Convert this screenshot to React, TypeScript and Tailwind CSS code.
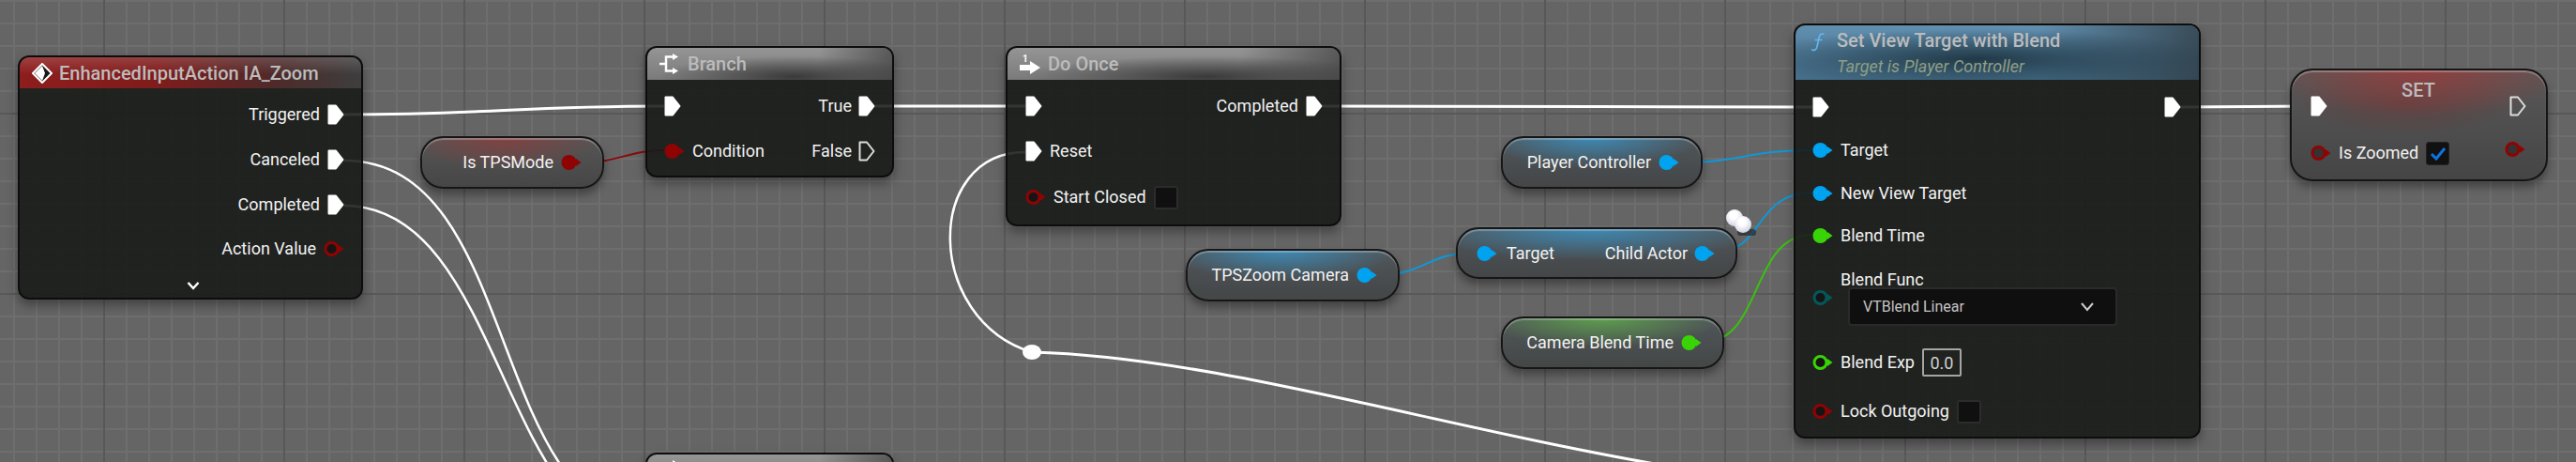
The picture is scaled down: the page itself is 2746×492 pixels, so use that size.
import React from "react";

function Exec({ hollow = false }: { hollow?: boolean }) {
  return (
    <svg width="18" height="22" viewBox="0 0 18 22" className="shrink-0">
      <path
        d="M1.5 1.5 H9 L16.5 11 L9 20.5 H1.5 Z"
        fill={hollow ? "none" : "#ffffff"}
        stroke={hollow ? "#dddddd" : "#ffffff"}
        strokeWidth="2"
        strokeLinejoin="round"
      />
    </svg>
  );
}

function Pin({ color, hollow = false, inner = "#151515" }: { color: string; hollow?: boolean; inner?: string }) {
  return (
    <svg width="22" height="18" viewBox="0 0 22 18" className="shrink-0">
      <path d="M16 5 L21.5 9 L16 13 Z" fill={color} />
      {hollow ? (
        <circle cx="8.5" cy="9" r="6.5" fill={inner} stroke={color} strokeWidth="3" />
      ) : (
        <circle cx="8.5" cy="9" r="8" fill={color} />
      )}
    </svg>
  );
}

const RED = "#8f0303";
const BLUE = "#00a3f0";
const GREEN = "#38d406";
const TEAL = "#04585a";

function Check() {
  return <div className="w-[26px] h-[25px] rounded-[3px] border-2 border-[#2c2c2c] bg-[#101010] shrink-0" />;
}

const label = "text-[18px] leading-[24px] text-[#f2f2f2] whitespace-nowrap";
const title = "text-[20px] leading-[24px] font-medium text-[#bcbcbc] whitespace-nowrap";
const node =
  "absolute rounded-[12px] border-2 border-[#0d0d0d] bg-[rgba(23,25,23,0.88)] overflow-hidden shadow-[0_6px_12px_rgba(0,0,0,0.35)]";
const pill =
  "absolute rounded-[24px] border-2 border-[#161616] flex items-center shadow-[inset_0_2px_1px_rgba(255,255,255,0.28),0_6px_10px_rgba(0,0,0,0.35)]";
const headGrey =
  "bg-[radial-gradient(ellipse_55%_65%_at_60%_90%,#3a3a3a,transparent),linear-gradient(90deg,transparent_70%,rgba(50,50,50,0.6)),linear-gradient(180deg,#959595,#7a7a7a)]";

function BranchIcon() {
  return (
    <svg width="21" height="22" viewBox="0 0 21 22" className="shrink-0" fill="none">
      <path d="M0 11 H6 M7 11 V3.5 H15 M7 11 V18.5 H15" stroke="#fff" strokeWidth="2.5" />
      <path d="M14 0 L20 3.5 L14 7 Z M14 15 L20 18.5 L14 22 Z" fill="#fff" />
    </svg>
  );
}

function BranchHeader() {
  return (
    <div className={`h-[34px] flex items-center pl-[13px] gap-[9px] ${headGrey}`}>
      <BranchIcon />
      <span className={title}>Branch</span>
    </div>
  );
}

export default function App() {
  return (
    <div className="relative w-[2746px] h-[492px] overflow-hidden bg-[#656565] [font-family:Roboto,sans-serif] [background-image:linear-gradient(90deg,#585858_2px,transparent_2px),linear-gradient(180deg,#585858_2px,transparent_2px),linear-gradient(90deg,#6e6e6e_2px,transparent_2px),linear-gradient(180deg,#6e6e6e_2px,transparent_2px)] [background-size:192px_192px,192px_192px,24px_24px,24px_24px] [background-position:110px_0,0_120px,14px_0,0_0]">
      <svg className="absolute inset-0 w-full h-full" viewBox="0 0 2746 492" fill="none">
        <g stroke="#ffffff" strokeWidth="3">
          <path d="M367 122 C 520 122, 555 113, 708 113" />
          <path d="M933 113 H 1093" />
          <path d="M1410 113 C 1600 113, 1750 114, 1932 114" />
          <path d="M2325 114 C 2380 114, 2410 113, 2463 113" />
          <path d="M367 171 C 560 171, 515 560, 708 560" strokeWidth="2.5" />
          <path d="M367 219 C 540 219, 530 580, 708 580" strokeWidth="2.5" />
          <path d="M1093 162 C 985 162, 985 340, 1100 375" strokeWidth="2.5" />
          <path d="M1100 375 C 1300 380, 1550 460, 1800 500" />
        </g>
        <g strokeWidth="2">
          <path d="M620 173 C 660 173, 670 160, 708 160" stroke="#8a0a0a" />
          <path d="M1468 293 C 1520 293, 1520 269, 1574 269" stroke="#0e98d8" />
          <path d="M1790 173 C 1860 173, 1860 160, 1932 160" stroke="#0e98d8" />
          <path d="M1828 269 C 1880 269, 1870 205, 1932 205" stroke="#0e98d8" />
          <path d="M1814 365 C 1880 365, 1865 250, 1932 250" stroke="#38c40a" />
        </g>
      </svg>

      {/* Knot */}
      <svg className="absolute left-[1089px] top-[366px]" width="22" height="18" viewBox="0 0 22 18">
        <ellipse cx="11" cy="9" rx="10" ry="8" fill="#ffffff" />
      </svg>

      {/* Input action */}
      <div className={`${node} left-[19px] top-[59px] w-[368px] h-[260px]`}>
        <div className="h-[33px] flex items-center pl-[13px] gap-[7px] bg-[linear-gradient(180deg,rgba(255,255,255,0.16),rgba(255,255,255,0)_55%),linear-gradient(90deg,#8e1d1d_0%,#801c1c_40%,#4e2a2a_75%,#3e3e3e_100%)]">
          <svg width="22" height="22" viewBox="0 0 22 22" className="shrink-0">
            <path d="M11 1 L21 11 L11 21 L1 11 Z" fill="#191919" stroke="#fff" strokeWidth="2" strokeLinejoin="round" />
            <path d="M11 3 L3 11 L11 19 L14 11 Z" fill="#fff" />
          </svg>
          <span className={title}>EnhancedInputAction IA_Zoom</span>
        </div>
        <div className="pt-1 pr-[18px]">
          {["Triggered", "Canceled", "Completed"].map((t) => (
            <div key={t} className="h-12 flex items-center justify-end gap-2">
              <span className={label}>{t}</span>
              <Exec />
            </div>
          ))}
          <div className="h-[46px] flex items-center justify-end gap-2">
            <span className={label}>Action Value</span>
            <Pin color={RED} hollow />
          </div>
        </div>
        <div className="h-8 flex items-center pl-[178px]">
          <svg width="14" height="10" viewBox="0 0 14 10" fill="none">
            <path d="M1.5 2 L7 8 L12.5 2" stroke="#fff" strokeWidth="2.5" />
          </svg>
        </div>
      </div>

      {/* Is TPSMode */}
      <div className={`${pill} left-[448px] top-[145px] w-[196px] h-[56px] justify-end gap-2 pr-[22px] bg-[radial-gradient(ellipse_55%_65%_at_45%_0%,rgba(140,60,60,0.8),transparent),linear-gradient(180deg,#565656,#464646)]`}>
        <span className={label}>Is TPSMode</span>
        <Pin color={RED} />
      </div>

      {/* Branch */}
      <div className={`${node} w-[265px] left-[688px] top-[49px] h-[140px]`}>
        <BranchHeader />
        <div className="pt-1">
          <div className="h-12 flex items-center justify-between pl-[18px] pr-[18px]">
            <Exec />
            <div className="flex items-center gap-[7px]">
              <span className={label}>True</span>
              <Exec />
            </div>
          </div>
          <div className="h-12 flex items-center justify-between pl-[18px] pr-[18px]">
            <div className="flex items-center gap-2">
              <Pin color={RED} />
              <span className={label}>Condition</span>
            </div>
            <div className="flex items-center gap-[7px]">
              <span className={label}>False</span>
              <Exec hollow />
            </div>
          </div>
        </div>
      </div>

      {/* Do Once */}
      <div className={`${node} left-[1072px] top-[49px] w-[358px] h-[192px]`}>
        <div className={`h-[34px] flex items-center pl-[13px] gap-[7px] ${headGrey}`}>
          <svg width="23" height="23" viewBox="0 0 23 23" className="shrink-0">
            <text x="3" y="9" fontSize="10" fontWeight="700" fill="#fff" fontFamily="Roboto, sans-serif">1</text>
            <path d="M0 12 H11 V8 L22 15 L11 22 V18 H0 Z" fill="#fff" />
          </svg>
          <span className={title}>Do Once</span>
        </div>
        <div className="pt-1 pl-[19px] pr-[18px]">
          <div className="h-12 flex items-center justify-between">
            <Exec />
            <div className="flex items-center gap-2">
              <span className={label}>Completed</span>
              <Exec />
            </div>
          </div>
          <div className="h-12 flex items-center gap-2">
            <Exec />
            <span className={label}>Reset</span>
          </div>
          <div className="h-[50px] flex items-center gap-2">
            <Pin color={RED} hollow />
            <span className={label}>Start Closed</span>
            <Check />
          </div>
        </div>
      </div>

      {/* Second branch, cut by the bottom edge */}
      <div className={`${node} w-[265px] left-[688px] top-[482px] h-[140px]`}>
        <BranchHeader />
      </div>

      {/* TPSZoom Camera */}
      <div className={`${pill} left-[1264px] top-[265px] w-[228px] h-[56px] justify-end gap-2 pr-[22px] bg-[radial-gradient(ellipse_55%_60%_at_45%_0%,rgba(58,145,195,0.85),transparent),linear-gradient(180deg,#50565a,#444647)]`}>
        <span className={label}>TPSZoom Camera</span>
        <Pin color={BLUE} />
      </div>

      {/* Player Controller */}
      <div className={`${pill} left-[1600px] top-[145px] w-[215px] h-[56px] justify-end gap-2 pr-[23px] bg-[radial-gradient(ellipse_55%_60%_at_45%_0%,rgba(58,145,195,0.85),transparent),linear-gradient(180deg,#50565a,#444647)]`}>
        <span className={label}>Player Controller</span>
        <Pin color={BLUE} />
      </div>

      {/* Get Child Actor */}
      <div className={`${pill} left-[1552px] top-[242px] w-[300px] h-[55px] justify-between pl-5 pr-[22px] bg-[radial-gradient(ellipse_62%_65%_at_48%_0%,rgba(58,145,195,0.85),transparent),linear-gradient(180deg,#50565a,#444647)]`}>
        <div className="flex items-center gap-[10px]">
          <Pin color={BLUE} />
          <span className={label}>Target</span>
        </div>
        <div className="flex items-center gap-[7px]">
          <span className={label}>Child Actor</span>
          <Pin color={BLUE} />
        </div>
      </div>

      {/* Spheres */}
      <div className="absolute left-[1852px] top-[244px] w-[20px] h-[7px] rounded-full bg-[rgba(30,30,30,0.6)]" />
      <div className="absolute left-[1840px] top-[223px] w-[18px] h-[18px] rounded-full bg-[radial-gradient(circle_at_45%_35%,#ffffff_25%,#c6c8da_85%,#9ea1bb)]" />
      <div className="absolute left-[1849px] top-[230px] w-[18px] h-[18px] rounded-full bg-[radial-gradient(circle_at_45%_35%,#ffffff_25%,#c6c8da_85%,#9093b0)]" />

      {/* Camera Blend Time */}
      <div className={`${pill} left-[1600px] top-[337px] w-[238px] h-[56px] justify-end gap-2 pr-[22px] bg-[radial-gradient(ellipse_55%_60%_at_45%_0%,rgba(95,170,75,0.85),transparent),linear-gradient(180deg,#50565a,#444746)]`}>
        <span className={label}>Camera Blend Time</span>
        <Pin color={GREEN} />
      </div>

      {/* Set View Target */}
      <div className={`${node} left-[1912px] top-[25px] w-[434px] h-[442px]`}>
        <div className="h-[58px] flex pl-4 gap-3 bg-[radial-gradient(ellipse_60%_55%_at_45%_62%,#213947,transparent),linear-gradient(90deg,transparent_60%,rgba(45,55,62,0.75)),linear-gradient(180deg,#618faf,#46708c)]">
          <svg width="16" height="20" viewBox="0 0 16 20" fill="none" className="shrink-0 mt-2">
            <path d="M14.5 1.5 C11 0 9.5 2 9 5.5 L7 14.5 C6.5 18 4 19 1 18 M4.5 7.5 H12.5" stroke="#62b7ee" strokeWidth="1.6" />
          </svg>
          <div className="flex flex-col pt-[4px] gap-1">
            <span className={title}>Set View Target with Blend</span>
            <span className="text-[18px] leading-[24px] italic text-[#8f9f85] whitespace-nowrap">Target is Player Controller</span>
          </div>
        </div>
        <div className="pt-[6px] pl-[18px] pr-[19px]">
          <div className="h-[46px] flex items-center justify-between">
            <Exec />
            <Exec />
          </div>
          <div className="h-[46px] flex items-center gap-2">
            <Pin color={BLUE} />
            <span className={label}>Target</span>
          </div>
          <div className="h-[45px] flex items-center gap-2">
            <Pin color={BLUE} />
            <span className={label}>New View Target</span>
          </div>
          <div className="h-[45px] flex items-center gap-2">
            <Pin color={GREEN} />
            <span className={label}>Blend Time</span>
          </div>
          <div className="mt-[13px] flex items-center gap-2">
            <Pin color={TEAL} hollow />
            <div>
              <div className={`${label} h-5 leading-[20px]`}>Blend Func</div>
              <div className="ml-2 w-[287px] h-[41px] rounded-[4px] border-2 border-[#2a2a2a] bg-[#0f0f0f] flex items-center justify-between pl-[14px] pr-[22px]">
                <span className="text-[16px] text-[#c4c4c4]">VTBlend Linear</span>
                <svg width="16" height="11" viewBox="0 0 16 11" fill="none">
                  <path d="M2 2 L8 9 L14 2" stroke="#cccccc" strokeWidth="2" />
                </svg>
              </div>
            </div>
          </div>
          <div className="mt-[24px] h-[30px] flex items-center gap-2">
            <Pin color={GREEN} hollow />
            <span className={label}>Blend Exp</span>
            <div className="w-[42px] h-[30px] border-2 border-[#a5a5a5] rounded-[2px] flex items-center justify-center text-[18px] text-[#d0d0d0]">0.0</div>
          </div>
          <div className="mt-[24px] h-[26px] flex items-center gap-2">
            <Pin color={RED} hollow />
            <span className={label}>Lock Outgoing</span>
            <Check />
          </div>
        </div>
      </div>

      {/* SET */}
      <div className="absolute left-[2441px] top-[73px] w-[275px] h-[120px] rounded-[24px] border-2 border-[#141414] shadow-[inset_0_2px_1px_rgba(255,255,255,0.28),0_6px_10px_rgba(0,0,0,0.35)] bg-[radial-gradient(ellipse_62%_42%_at_50%_0%,rgba(150,60,60,0.9),transparent),radial-gradient(ellipse_45%_30%_at_45%_30%,rgba(110,50,50,0.5),transparent),linear-gradient(180deg,#585858,#454545)]">
        <div className="mt-2 h-[60px] flex items-center justify-between pl-5 pr-[21px]">
          <Exec />
          <span className="self-start mt-[1px] text-[20px] leading-[24px] font-medium text-[#bcbcbc]">SET</span>
          <Exec hollow />
        </div>
        <div className="h-10 flex items-center justify-between pl-5 pr-[22px]">
          <div className="flex items-center gap-2">
            <Pin color={RED} hollow inner="#333333" />
            <span className={label}>Is Zoomed</span>
            <div className="w-[25px] h-[25px] rounded-[3px] bg-[#111111] border border-[#222] flex items-center justify-center">
              <svg width="18" height="15" viewBox="0 0 18 15" fill="none">
                <path d="M2 8 L7 13 L16 2" stroke="#0f72e0" strokeWidth="3" />
              </svg>
            </div>
          </div>
          <div className="mb-2">
            <Pin color={RED} hollow inner="#333333" />
          </div>
        </div>
      </div>
    </div>
  );
}
